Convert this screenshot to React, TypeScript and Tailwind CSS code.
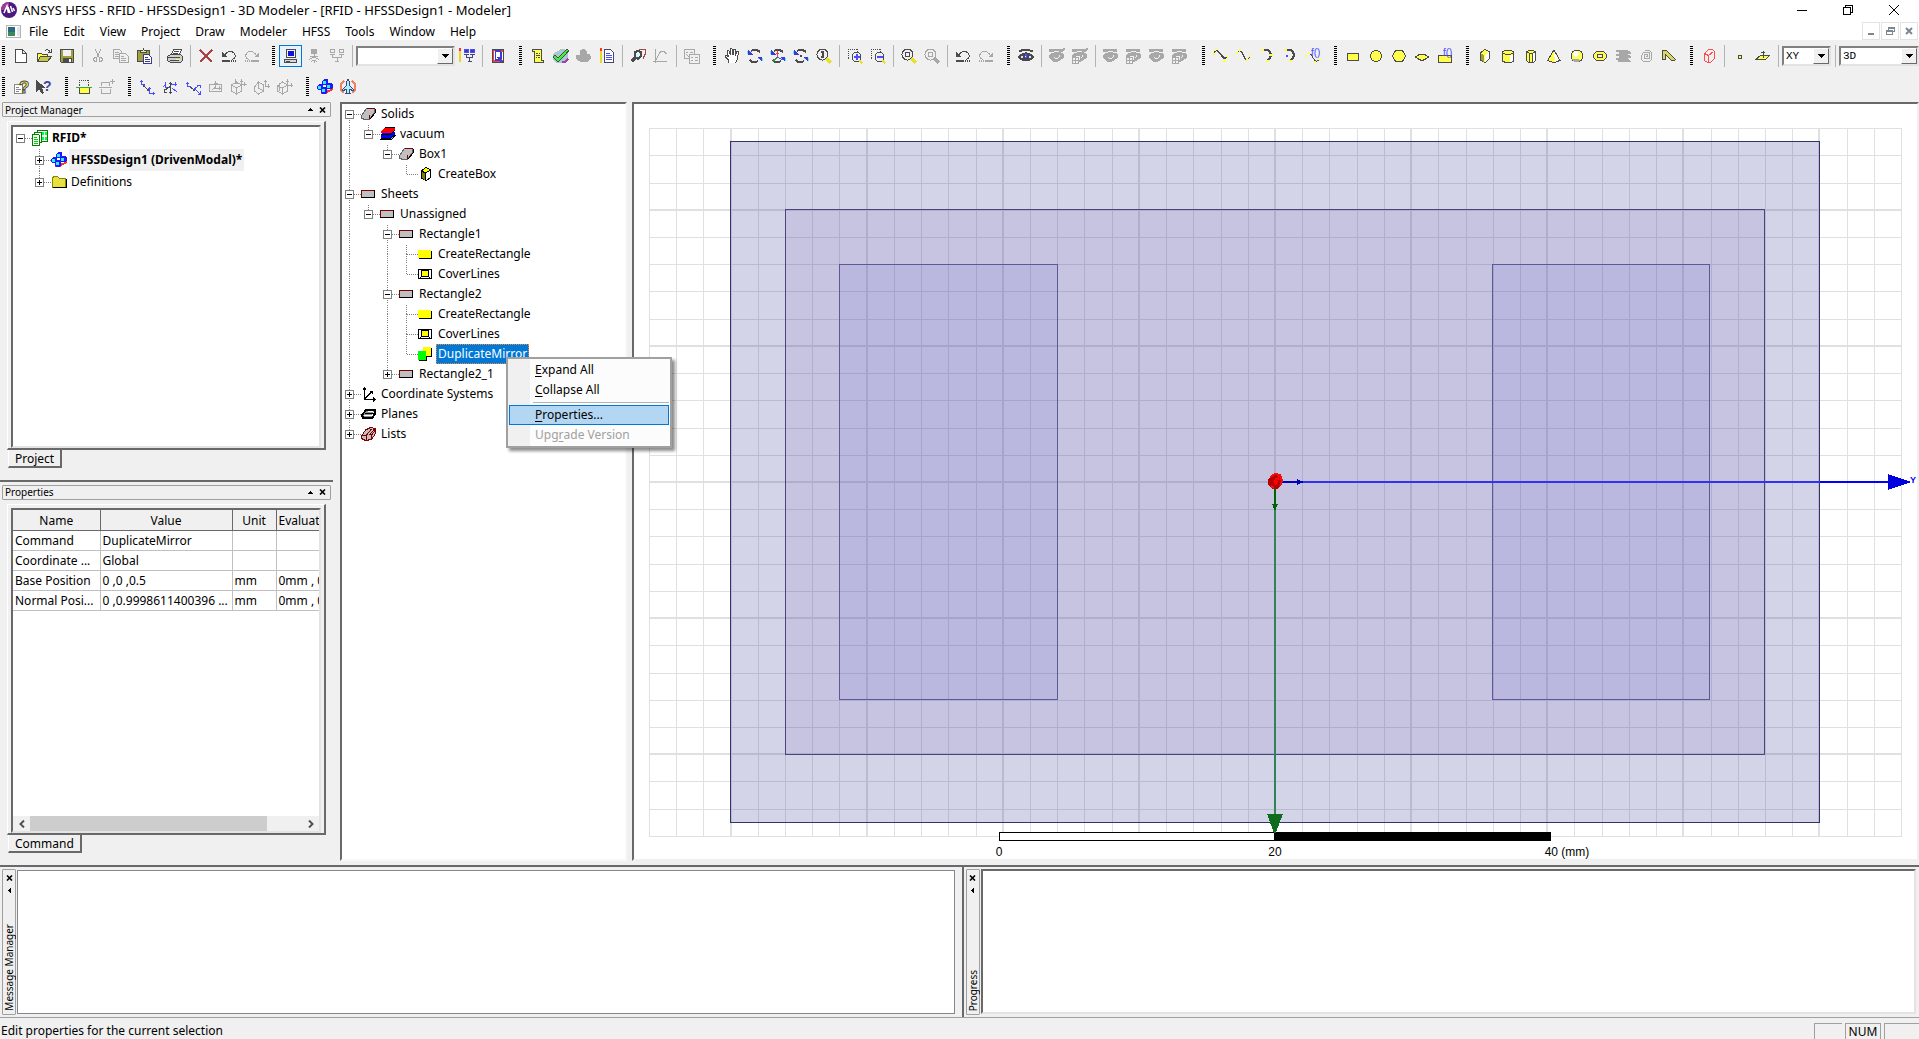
import React, { useState } from 'react';
import { clsx } from 'clsx';

const INK = '#4b4b4b';
const DIM = '#a8a8a8';
const YEL = '#ffff4b';
const BLU = '#4b4bff';

interface StrokeProps {
  d: string;
  s?: string;
  f?: string;
  w?: number;
}

const P = ({ d, s = INK, f = 'none', w = 1 }: StrokeProps) => <path d={d} stroke={s} fill={f} strokeWidth={w} />;

const undoIcon = (c: string) => (
  <>
    <P s={c} d="M4 6.5 Q9 1 13 5 Q16.5 9 11 11.5" />
    <P s="none" f={c} d="M1 4v5h5z" />
    <P s={c} w={2} d="M1 13h8" />
    <P s={c} w={2} d="M10 13h1M12 13h1M14 13h1" />
  </>
);

const redoIcon = (c: string) => (
  <>
    <P s={c} d="M12 6.5 Q7 1 3 5 Q-.5 9 5 11.5" />
    <P s="none" f={c} d="M15 4v5h-5z" />
    <P s={c} w={2} d="M7 13h8" />
    <P s={c} w={2} d="M1 13h1M3 13h1M5 13h1" />
  </>
);

const rotateIcon = (extra: React.ReactNode) => (
  <>
    <P s="#4bf0ff" w={2} d="M1 3v3M5 6h-4M15 10v3M11 10h4" />
    <P w={2} d="M4 3l2-1h4l3 2M3 12l2 2h4l2-1" />
    <P s="none" f="#3b3bd8" d="M1 2v5h5zM15 14v-5h-5z" />
    {extra}
  </>
);

const lensIcon = (c: string, handle: string, inner: React.ReactNode) => (
  <>
    <circle cx="6.5" cy="6.5" r="5.5" fill="#f0f0f0" stroke={c} />
    <P s={handle} w={3} d="M10.5 10.5 L15 15" />
    {inner}
  </>
);

const boxLensIcon = (vertical: boolean) => (
  <>
    <P d="M1.5 1v10M1 1.5h10M10.5 1v3" />
    <P s="#f0f0f0" d="M2 1.5h1M4 1.5h1M6 1.5h1M8 1.5h1M1.5 2v1M1.5 4v1M1.5 6v1M1.5 8v1M10.5 2v1" />
    <circle cx="9.5" cy="9" r="4.5" fill="#f0f0f0" stroke={INK} />
    <P s={BLU} w={2} d={vertical ? 'M7 9h6M10 6v6' : 'M7 9h6'} />
    <P s="#e8e030" w={2} d="M12.5 12 L15.5 15.5" />
  </>
);

const eyeOffIcon = (boxed: boolean, struck: boolean) => (
  <>
    <P s="none" f={DIM} d="M0 1h14v3H0zM0 7 Q7 1 15 6 L15 9 Q10 15 5 14 L0 10z" />
    <P s="#f0f0f0" d="M1 5.5 Q7 2 13 5" />
    <P s="#f0f0f0" d="M5 9 Q7 12 10 9 V7" />
    {struck && <P s={DIM} w={2} d="M9 6 L16 0" />}
    {boxed && (
      <>
        <P s={DIM} f="#f0f0f0" d="M.5 9.5h6v6h-6zM3.5 7.5h5v6" />
        <P s={DIM} d="M.5 12.5h6M3.5 9.5v6" />
      </>
    )}
  </>
);

const axesIcon = (
  <>
    <P s={BLU} d="M2.5 1v5M1 2.5h3M2 5.5h4M5 4.5v3" />
    <P d="M4 6.5 L10 11.5M7.5 11.5h2M9.5 9v2" />
    <P s={BLU} d="M10.5 8v6h5M9 9.5h3M14.5 12.5v3" />
  </>
);

const cubesIcon = (
  <>
    <P s="none" f="#ff3030" d="M4 15l5 0 3-2 4-2v-3l-4 3-8 2z" />
    <P s="none" f="#1a1aff" d="M5 2l2-2h4v4l-1 2h-5zM0 7l2-2h4v5l-1 1h-4l-1-1zM9 6l2-2h3l2 2v2l-2 2h-5zM4 10l2-2h3l1 2v3l-2 2h-3l-1-1z" />
    <P s="none" f="#30f0ff" d="M6 2h3v3H6zM1 7h3v3H1zM10 6h3v3h-3zM5 10h3v3H5z" />
  </>
);

const eqnMark = (
  <text x="6" y="8" fontSize="10" fill={BLU} className="font-['Liberation_Sans',Arial,sans-serif]">
    f()
  </text>
);

const icons: Record<string, React.ReactNode> = {
  new: <P f="#fff" d="M2.5 1.5h7l4 4v9h-11zM9.5 1.5v4h4" />,
  open: (
    <>
      <P f={YEL} d="M1.5 13.5v-8h4l1 1h5v2" />
      <P f="#c8c840" d="M1.5 13.5l3-5h11l-4 5z" />
      <P d="M9 2.5 Q12 0 14.5 4.5M12 4.5h3V1" />
    </>
  ),
  save: (
    <>
      <P f="#a0a040" d="M1.5 1.5h13v13h-12l-1-1z" />
      <P s="none" f="#f0f0f0" d="M4 2h8v6H4z" />
      <P s="none" f={INK} d="M4 10h9v5H4z" />
      <P s="none" f="#fff" d="M10 11h2v3h-2z" />
    </>
  ),
  cut: <P s={DIM} d="M5 1 L9.5 10M11 1 L6.5 10M4.5 9.5h2v4h-2l-1-2zM9.5 9.5h2l1 2-1 2h-2z" />,
  copy: (
    <>
      <P s={DIM} d="M.5 1.5h6l2 2v7h-8zM2 4.5h4M2 6.5h4M2 8.5h4" />
      <P s={DIM} f="#f0f0f0" d="M6.5 5.5h6l3 3v6h-9zM8 8.5h3M8 10.5h5M8 12.5h5" />
    </>
  ),
  paste: (
    <>
      <P f="#a0a040" d="M1.5 2.5h12v11h-12z" />
      <P f="#e8e8a0" d="M4.5 4.5v-2h2l1-1.5 1 1.5h2v2z" />
      <P s="#3a3a90" f="#fff" d="M7.5 6.5h5l3 3v6h-8zM9 9.5h3M9 11.5h5M9 13.5h5" />
    </>
  ),
  print: (
    <>
      <P f="#fff" d="M4.5 6.5l2-5h8l-2 5z" />
      <P f="#d0d0d0" d="M.5 8.5l3-2h10l2 2v4l-2 2h-10l-3-2z" />
      <P d="M1 9.5h12M3 12.5h9M7 3.5h5M6 5h5" />
      <P s={YEL} d="M9 11.5h3" />
    </>
  ),
  delete: <P s="#a84444" w={2} d="M2 2 L14 14M14 2 L2 14" />,
  undo: undoIcon(INK),
  redo: redoIcon(DIM),
  pc: (
    <>
      <P f="#f4f4f4" d="M3.5 1.5h9v8h-9z" />
      <P s="none" f="#1010e0" d="M5 3h6v5H5z" />
      <P f="#d8d8d8" d="M1.5 11.5h12v3h-12zM3 13h4" />
    </>
  ),
  remote: (
    <>
      <P s={DIM} f={DIM} d="M5.5 1.5h5v4h-5z" />
      <P s={DIM} d="M8 6v4M4 8.5h8M3 12 Q8 7 13 12M5 14 Q8 10 11 14M8 12v3" />
    </>
  ),
  cluster: (
    <>
      <P s={DIM} d="M1.5 1.5h4v3h-4zM10.5 1.5h4v3h-4zM3.5 7v2h9V7M8 9v4M6 13.5h4" />
      <P s={DIM} d="M1 6.5h5M10 6.5h5" />
    </>
  ),
  hpc: (
    <>
      <P s="#e8d820" w={2} d="M1 3v11" />
      <P s="#ff3030" w={2} d="M1 0v3" />
      <P s={BLU} f="#3b3bb0" d="M5.5 1.5h4v3h-4zM11.5 1.5h4v3h-4z" />
      <P s="#44447a" d="M5 6.5h5M11 6.5h5M7.5 7v2h6V7M10.5 9v4M8.5 13.5h4" />
    </>
  ),
  queue: (
    <>
      <P f="#ff3b3b" d="M2.5 1.5h11v13h-11z" />
      <P s="#3b3bd8" f="#fff" w={2} d="M6 3h4l1 2v5l-1 2H6l-1-2V5z" />
      <P s="#fff" d="M4.5 3v9M12 4v8" />
      <P s="#3b3bd8" w={2} d="M8 9 l4 5" />
    </>
  ),
  script: (
    <>
      <P f={YEL} d="M2.5 1.5h9v11h2v2h-9v-11h-2z" />
      <P d="M6 5.5h2M9 5.5h1M6 7.5h4M6 9.5h1M8 9.5h2" />
    </>
  ),
  validate: (
    <>
      <P s="none" f="#a8c8d0" d="M0 6l8-5 7 1v8l-5 5H3l-3-3z" />
      <P s="#a040a8" w={2} d="M9 14h3l3-3" />
      <P w={4} d="M1 8 l4 4 L15 2" />
      <P s="#40f040" w={2} d="M1.5 8 l3.5 4 L14.5 2" />
    </>
  ),
  analyze: <P s="none" f={DIM} d="M4 2l4-1 3 2v3h3l1 4-3 4H5l-5-3V7h4z" />,
  notes: (
    <>
      <P s="#e8d820" w={2} d="M2 3v12" />
      <P s="#ff3030" w={2} d="M2 0v3" />
      <P s="#44447a" f="#fff" d="M5.5 1.5h6l3 3v10h-9z" />
      <P s={BLU} d="M7 5.5h4M7 7.5h6M7 9.5h6M7 11.5h6" />
    </>
  ),
  results: (
    <>
      <P s="#a84444" d="M8 2.5l2-1h5v5l-2 4" />
      <P w={2} f="#d8f8ff" d="M5 4l3-1 3 1v4l-3 3-3-2z" />
      <P w={3} d="M6 9 L1.5 13.5" />
    </>
  ),
  plot: <P s={DIM} d="M2.5 1v14M0 13.5h14M3 12 L6.5 5 Q10 1 13.5 6" />,
  report: (
    <>
      <P s={DIM} d="M.5 1.5h10v9h-10zM2 4.5h2M6 4.5h3M2 6.5l3 2" />
      <P s={DIM} f="#f0f0f0" d="M5.5 6.5h10v9h-10zM7 9.5h2M11 9.5h3M7 12.5h2M11 12.5h3" />
    </>
  ),
  pan: <P f="#fff" d="M4.5 15v-3L1 8.5V7h2l1.5 2L3 3.500V2h1.500L6.500 7V1L8 .5 9 7l1-6h1.500V7.500L13 3h1.500l-1 8-2 4" />,
  rotate: rotateIcon(null),
  rotateAxis: rotateIcon(
    <>
      <P s="#f04040" d="M7.500 3v6M6 5.500h3" />
      <P s="#30a030" d="M7.500 9l-4 4" />
      <P s={BLU} d="M7.500 9l5 3" />
    </>
  ),
  rotateCenter: rotateIcon(<P w={2} d="M7 8h2" />),
  zoomFit: lensIcon(INK, '#e8e030', <P w={2} d="M6.500 3v7M5 4h3M5 9h3" />),
  zoomIn: boxLensIcon(true),
  zoomOut: boxLensIcon(false),
  fitAll: lensIcon(INK, '#e8e030', <P d="M4.500 4.500h4v4h-4z" />),
  fitSel: lensIcon(DIM, DIM, <P s={DIM} d="M4.500 4.500h4v4h-4z" />),
  eye: (
    <>
      <P d="M1 3.500 Q7 0 15 3.500" w={2} />
      <P w={2} f="#e0e0e0" d="M1 9 Q8 2 15 9 Q8 16 1 9z" />
      <circle cx="8" cy="9" r="3.500" fill="#44446a" />
      <P s={BLU} w={2} d="M8 6v4" />
      <P s="#fff" d="M7 8.500h1" />
    </>
  ),
  hide: eyeOffIcon(false, true),
  hideBox: eyeOffIcon(true, true),
  show: eyeOffIcon(false, false),
  showBox: eyeOffIcon(true, false),
  line: (
    <>
      <P s={YEL} w={2} d="M0 6h2M2 2h3M10 13h3M13 9h2" />
      <P d="M1 4.500l3-2.500 8 8.500 3-2.500M4 3l8 8.500" />
      <P s={YEL} w={2} d="M0 5h1M11 12h1M14 8h1" />
    </>
  ),
  spline: (
    <>
      <P d="M1 5 Q4 0 7 7 Q10 15 14 9M5 3 Q6 4 8 8 Q9 11 11 12" />
      <P s={YEL} w={2} d="M0 5h2M3 2h2M10 12h2M13 8h2" />
    </>
  ),
  arc3: (
    <>
      <P w={2} d="M5 2h4l2 2 1 3-1 3-3 3" />
      <P s={YEL} w={2} d="M2 2h3M11 7h3M7 13h3" />
    </>
  ),
  arcC: (
    <>
      <P w={2} d="M5 2h4l2 2 1 3-1 3-3 3" />
      <P s={YEL} w={2} d="M2 2h3M7 13h3" />
      <P s={BLU} w={2} d="M4 8h2" />
    </>
  ),
  curveEq: (
    <>
      <P d="M3 5.500 Q6 5 8 10 Q11 15 14 12" />
      <P s={YEL} w={2} d="M0 8h2M3 5h2M9 14h2M14 11h2" />
      {eqnMark}
    </>
  ),
  rect: <P f={YEL} d="M2.500 5.500h11v7h-11z" />,
  circle: <circle cx="8" cy="8" r="5.500" fill={YEL} stroke={INK} />,
  polygon: <P f={YEL} d="M4.500 2.500h7l3 5.500-3 5.500h-7L1.500 8z" />,
  ellipse: <P f={YEL} d="M1.500 9l3-2 2-1h3l2 1 3 2-3 2-2 1h-3l-2-1z" />,
  surfEq: (
    <>
      <P f={YEL} d="M1.500 7.500h13v7h-13z" />
      {eqnMark}
    </>
  ),
  box: (
    <>
      <P f={YEL} d="M3.500 5l4-3.500 5 2v7l-4 4-5-2z" />
      <P s="none" f="#fff" d="M8 7l4-3v7l-4 3z" />
      <P s="none" f="#a0a030" d="M4 6l3 1v7l-3-2z" />
    </>
  ),
  cylinder: (
    <>
      <P f={YEL} d="M2.500 4v9l3 1.500h5l3-1.500V4l-3-2h-5z" />
      <P s="none" f="#fff" d="M10 7h3v6l-3 1z" />
      <P d="M2.500 4.500l3 2h5l3-2" />
    </>
  ),
  prism: (
    <>
      <P f={YEL} d="M3.500 3.500v9l2 2h5l2-2v-9l-3-1h-3z" />
      <P s="none" f="#fff" d="M10 5h2v7l-2 2z" />
      <P d="M3.500 3.500l3 2h3l3-2M6.500 5v9M9.500 5v9" />
    </>
  ),
  cone: (
    <>
      <P f={YEL} d="M8 2 L14 12.500 8 14.500 1.500 12.500z" />
      <P s="none" f="#fff" d="M8 3l5 9-4 2z" />
    </>
  ),
  sphere: (
    <>
      <circle cx="8" cy="8" r="6" fill={YEL} stroke={INK} />
      <P s="none" f="#fff" d="M5 3h3l2 3-3 3-3-2z" />
      <P s="none" f={DIM} d="M3 11h6l2 2-3 1H5z" />
    </>
  ),
  torus: (
    <>
      <P f={YEL} d="M4.500 3.500h7l3 3v3l-3 3h-7l-3-3v-3z" />
      <P f="#f0f0f0" d="M5.500 6.500h5v3h-5z" />
    </>
  ),
  helix: <P s={DIM} w={2} d="M1 3h11l3 2H4M1 7h11l3 2H4M1 11h11l2 2H3" />,
  spiral: <P s={DIM} d="M8 8.500h1.500V6.500H6.500v4h5v-6h-6l-2 3v4l2 2h6l2-2v-7l-2-2h-5" />,
  sweep: <P f="#d8d860" d="M1.500 11.500v-9h4l9 9-1 1h-3l-6-6v5z" />,
  region: <P s="#ff4b4b" d="M3.500 5.500l4-4h4l2 2v7l-4 4h-3l-3-2zM3.500 5.500l4 2 5-4M7.500 7.500v7" />,
  point: <P f={YEL} d="M6.500 7.500h3v3h-3z" />,
  plane: (
    <>
      <P f={YEL} d="M5.500 7.500h9l-4 4h-10z" />
      <P d="M8 9.500v-7M6 4.500h4" />
    </>
  ),
  help: (
    <>
      <P s="#888" f="#fff" d="M1.500 5.500h8v9h-8zM3 8.500h3M3 10.500h5M3 12.500h3" />
      <text x="6" y="14" fontSize="17" fontWeight="bold" fill={YEL} stroke={INK} className="font-['Liberation_Sans',Arial,sans-serif]">
        ?
      </text>
    </>
  ),
  whatsThis: (
    <>
      <P s="none" f={INK} d="M0 1v12l3-3 3 5 2-1-2-5h4z" />
      <text x="7" y="12" fontSize="14" fontWeight="bold" fill="#44449a" className="font-['Liberation_Sans',Arial,sans-serif]">
        ?
      </text>
    </>
  ),
  section: (
    <>
      <P d="M3.500 7V1.500h9V7" />
      <P s="#f0f0f0" d="M4 1.500h1M6 1.500h1M8 1.500h1M10 1.500h1M3.500 2v1M3.500 4v1M12.500 2v1M12.500 4v1" />
      <P f={YEL} d="M3.500 8.500h10v6h-10z" />
      <P s="#30b030" d="M0 8.500h16" />
    </>
  ),
  sectionAdd: (
    <>
      <P s={DIM} d="M2.500 7V3.500h8V7M2.500 9.500v5h9v-5M0 8.500h13M13.500 0v5M11 2.500h5" />
    </>
  ),
  csRel: axesIcon,
  csRot: (
    <>
      <P s={BLU} d="M3.500 3v5h4M1 7.500l3-2M9 5.500h6M13.500 3v4M10 9l5 4" />
      <P d="M8.500 3v12M7 4.500h3M2 12l6-5M2 10v3h3M7 13.500h3" />
    </>
  ),
  csBoth: (
    <>
      <P s={BLU} d="M2.500 3v5M1 4.500h3M2 7.500h4" />
      <P d="M5 8 L10 11.500M7.500 11.500h2" />
      <P s={BLU} d="M14.500 6 L9 10M9.500 10l6 5M15.500 12v3h-3M12 6.500h3v2" />
    </>
  ),
  csFace: <P s={DIM} d="M1.500 5.500h12v7h-12zM7.500 2v7h6M5.500 4h4M4 11l4-3M11.500 7v4" />,
  csObj: <P s={DIM} d="M.5 6l5-3 5 3v6l-5 3-5-3zM.5 6l5 3 5-3M5.500 9v6M4.500 0v4h4M10.500 0v5h5M9 2h3M13.500 3v4" />,
  csEdge: <P s={DIM} d="M.5 8l4-5 5 3v6l-5 3-4-3zM4.500 3v6l5 3M11.500 1v6h4M10 2.500h3M14 4.500v4" />,
  csPart: <P s={DIM} d="M.5 7l5-4 5 3v6l-5 3-5-3zM.5 7l5 2 5-3M5.500 9v6M2.500 4v8M10.500 0v6h5M9 2h3M14 4v4" />,
  cubes: cubesIcon,
  antenna: (
    <>
      <P s="#f08060" w={2} d="M4 2 L1 5v6l3 3M12 2 L15 5v6l-3 3" />
      <P s="#3a4a80" f="#a8f0f8" d="M8 .5l1.500 2v4l4 4v1l-4-1v3l1 1h-5l1-1v-3l-4 1v-1l4-4v-4z" />
    </>
  ),
  project: (
    <>
      <P s="#008000" f="#fff" d="M5.500.5h10v11h-10z" />
      <P s="#008000" f="#fff" d="M2.500 2.500h7v10h-7z" />
      <P s="#008000" f="#fff" d="M.5 4.500h6l1 1v10h-7z" />
      <P s="#00d000" d="M2 7.500h3M2 9.500h4M2 11.500h4M2 13.500h4" />
      <P s="#00ff40" w={2} d="M11 2v3M14 2v3M11 7v3M14 7v3" />
    </>
  ),
  folder: (
    <>
      <P s="#888800" f="#e8e040" d="M1.500 13.500v-9l1-2h4l2 2h6v9z" />
      <P s="#000" d="M2 13.500h13.500V5" />
    </>
  ),
  solid: (
    <>
      <P s="#666" f="#c0c0c0" d="M.5 9.500l5-7h8v4l-5 7h-4l-4-1z" />
      <P s="#800000" d="M6 2.500h8M8.500 13V9" />
      <P s="#000" d="M9 13l5-6V3" />
    </>
  ),
  material: (
    <>
      <P s="#000" f="#00ffff" d="M.5 13.500l4-4h11l-4 4z" />
      <P s="none" f="#0000ff" d="M1 8l4-2h10v3l-4 3H1z" />
      <P s="none" f="#ff0000" d="M1 5l4-4h10v3l-4 3H1z" />
      <P s="#000" d="M1 8h10l4-4M5 1.500h10M1 12h10l4-3" />
    </>
  ),
  createBox: (
    <>
      <P s="#000" f="#ffff00" d="M3.500 5l4-3.500 5 2v8l-4 3-5-2z" />
      <P s="none" f="#fff" d="M8 7l4-3v7l-4 3z" />
      <P s="none" f="#808000" d="M4 6l3 1v7l-3-2z" />
      <P s="#000" d="M3.500 5l4 2 5-3M7.500 7v7" />
    </>
  ),
  sheet: (
    <>
      <P s="#000" f="#c0c0c0" d="M.5 4.500h13v7H.5z" />
      <P s="#800000" d="M.5 11V4.500H13" />
    </>
  ),
  createRect: (
    <>
      <P s="none" f="#ffff00" d="M0 4h13v8H0z" />
      <P s="#000" d="M1 12.500h12.500V5" />
    </>
  ),
  coverLines: (
    <>
      <P s="#000" f="#fff" d="M.5 3.500h13v9H.5z" />
      <P s="#000" f="#ffff00" d="M3.500 4.500h7v6h-7z" />
      <P s="#000" d="M1 3.500h12M1 12.500l2-1M13 12.500l-2-1" />
    </>
  ),
  dupMirror: (
    <>
      <P s="none" f="#ffff00" d="M5 1h8v9H5z" />
      <P s="#000" d="M6 10.500h7.500V2" />
      <P s="none" f="#00ff00" d="M0 5h8v9H0z" />
      <P s="#000" d="M1 14.500h7.500V11" />
    </>
  ),
  coord: <P s="#000" d="M3.500 1v12h10M2 3.500l1.500-2 1.500 2M12 11.500l2 2-2 2M3.500 13L11 5.500M9 5.500h2.500V8" />,
  planes: (
    <>
      <P s="#000" f="#909090" w={2} d="M1 9l4-5h9v4l-3 4H2z" />
      <P s="#fff" d="M3 9.500h8l2-3M7 5.500h5" />
      <P s="#000" d="M4 7.500h9M2 11.500h9" />
    </>
  ),
  lists: (
    <>
      <P s="#800000" f="#c0c0c0" d="M.5 10l4-6 5-2.500 5 1v5l-4 6-6 1-4-2z" />
      <P s="#800000" d="M5.500 14V9l5-6M.5 10l5-1M8.500 9l5-6M10.500 13v-4l4-5" />
    </>
  ),
};

const Icon = ({ name, className }: { name: string; className?: string }) => (
  <svg viewBox="0 0 16 16" shapeRendering="crispEdges" aria-hidden="true" className={clsx('h-4 w-4 flex-none', className)}>
    {icons[name]}
  </svg>
);

const ToolButton = ({ name, active }: { name: string; active?: boolean }) => (
  <button
    type="button"
    aria-label={name}
    className={clsx(
      'flex h-[22px] w-[23px] flex-none items-center justify-center',
      active && 'border border-[#0078d7] bg-[#e5f1fb]'
    )}
  >
    <Icon name={name} />
  </button>
);

const Divider = () => (
  <div className="flex w-2 flex-none justify-center">
    <div className="h-[22px] w-px bg-[#b4b4b4]" />
  </div>
);

/* '|' in the list draws a divider */
const Tools = ({ names }: { names: string[] }) => (
  <>{names.map((n, i) => (n === '|' ? <Divider key={i} /> : <ToolButton key={i} name={n} active={n === 'pc'} />))}</>
);

const Group = ({ children, className = 'pr-2' }: { children: React.ReactNode; className?: string }) => (
  <div className={clsx('flex flex-none items-center pl-[2px]', className)}>
    <div className="mr-1 h-[19px] w-[3px] bg-[repeating-linear-gradient(to_bottom,#000_0_1px,transparent_1px_2px)]" />
    {children}
  </div>
);

const Combo = ({ label, options, className }: { label: string; options: string[]; className: string }) => (
  <div className={clsx('relative flex h-5 border-2 border-t-[#808080] border-r-[#e3e3e3] border-b-[#e3e3e3] border-l-[#808080] bg-white', className)}>
    <select
      aria-label={label}
      className="w-full appearance-none bg-white pl-[2px] font-['Liberation_Mono',monospace] text-[11px] leading-4 text-black outline-none"
    >
      {options.map((o) => (
        <option key={o}>{o}</option>
      ))}
    </select>
    <span className="pointer-events-none absolute top-0 right-0 flex h-4 w-4 items-center justify-center border border-t-white border-r-[#696969] border-b-[#696969] border-l-white bg-[#f0f0f0]">
      <svg viewBox="0 0 7 4" className="h-1 w-[7px]" shapeRendering="crispEdges" aria-hidden="true">
        <path d="M0 0h7L3.500 4z" />
      </svg>
    </span>
  </div>
);

interface TreeItem {
  icon: string;
  label: string;
  bold?: boolean;
  state?: 'selected' | 'inactive';
  children?: TreeItem[];
  collapsed?: boolean;
}

interface TreeRowsProps {
  items: TreeItem[];
  tall?: boolean;
  guides?: boolean[];
}

/* one 19px column of dotted connectors */
const Guide = ({ up, down, across, box }: { up?: boolean; down?: boolean; across?: boolean; box?: 'plus' | 'minus' }) => (
  <svg width="19" height="100%" viewBox="0 0 19 22" preserveAspectRatio="xMidYMid slice" shapeRendering="crispEdges" className="flex-none" aria-hidden="true">
    <g stroke="#808080" strokeDasharray="1 1">
      {up && <path d="M7.500 0V11" />}
      {down && <path d="M7.500 11V22" />}
      {across && <path d="M8 11.500H19" />}
    </g>
    {box && <path d="M3.500 7.500h8v8h-8z" fill="#fff" stroke="#808080" />}
    {box && <path d={box === 'plus' ? 'M5 11.500h5M7.500 9v5' : 'M5 11.500h5'} stroke="#000" />}
  </svg>
);

const TreeRows = ({ items, tall, guides = [] }: TreeRowsProps) => {
  const [closed, setClosed] = useState<Record<number, boolean>>({});

  return (
    <ul>
      {items.map((item, i) => {
        const last = i === items.length - 1;
        const expandable = item.children !== undefined || item.collapsed;
        const isOpen = item.children !== undefined && !closed[i];
        return (
          <li key={i}>
            <div
              className={clsx('flex items-center', tall ? 'h-[22px]' : 'h-5')}
              onDoubleClick={() => setClosed({ ...closed, [i]: !closed[i] })}
            >
              {guides.map((g, k) => (
                <Guide key={k} up={g} down={g} />
              ))}
              <Guide
                up={guides.length > 0 || i > 0}
                down={!last}
                across
                box={expandable ? (isOpen ? 'minus' : 'plus') : undefined}
              />
              <Icon name={item.icon} />
              <span
                className={clsx(
                  'ml-[2px] flex h-full items-center border px-px whitespace-nowrap',
                  item.bold && 'font-bold',
                  item.state === 'selected' ? 'border-dotted border-[#ff8728] bg-[#0078d7] text-white' : 'border-transparent',
                  item.state === 'inactive' && 'bg-[#f0f0f0]'
                )}
              >
                {item.label}
              </span>
            </div>
            {isOpen && <TreeRows items={item.children!} tall={tall} guides={[...guides, !last]} />}
          </li>
        );
      })}
    </ul>
  );
};

const projectTree: TreeItem[] = [
  {
    icon: 'project',
    label: 'RFID*',
    bold: true,
    children: [
      { icon: 'cubes', label: 'HFSSDesign1 (DrivenModal)*', bold: true, state: 'inactive', collapsed: true },
      { icon: 'folder', label: 'Definitions', collapsed: true },
    ],
  },
];

const modelTree: TreeItem[] = [
  {
    icon: 'solid',
    label: 'Solids',
    children: [
      {
        icon: 'material',
        label: 'vacuum',
        children: [{ icon: 'solid', label: 'Box1', children: [{ icon: 'createBox', label: 'CreateBox' }] }],
      },
    ],
  },
  {
    icon: 'sheet',
    label: 'Sheets',
    children: [
      {
        icon: 'sheet',
        label: 'Unassigned',
        children: [
          {
            icon: 'sheet',
            label: 'Rectangle1',
            children: [
              { icon: 'createRect', label: 'CreateRectangle' },
              { icon: 'coverLines', label: 'CoverLines' },
            ],
          },
          {
            icon: 'sheet',
            label: 'Rectangle2',
            children: [
              { icon: 'createRect', label: 'CreateRectangle' },
              { icon: 'coverLines', label: 'CoverLines' },
              { icon: 'dupMirror', label: 'DuplicateMirror', state: 'selected' },
            ],
          },
          { icon: 'sheet', label: 'Rectangle2_1', collapsed: true },
        ],
      },
    ],
  },
  { icon: 'coord', label: 'Coordinate Systems', collapsed: true },
  { icon: 'planes', label: 'Planes', collapsed: true },
  { icon: 'lists', label: 'Lists', collapsed: true },
];

const CloseGlyph = () => (
  <svg viewBox="0 0 7 6" className="h-[6px] w-[7px]" aria-hidden="true">
    <path d="M1 .5 L6 5.500M6 .5 L1 5.500" stroke="#000" strokeWidth="1.600" />
  </svg>
);

const Caption = ({ title }: { title: string }) => (
  <div className="mx-[2px] flex h-[15px] flex-none items-center rounded-[1px] border border-[#a0a0a0] pr-[2px] pl-[2px]">
    <h2 className="flex-1 text-[10px] leading-3">{title}</h2>
    <button type="button" aria-label={`Collapse ${title}`} className="flex h-3 w-3 items-center justify-center">
      <svg viewBox="0 0 5 3" className="h-[3px] w-[5px]" shapeRendering="crispEdges" aria-hidden="true">
        <path d="M0 3h5L2.500 0z" />
      </svg>
    </button>
    <button type="button" aria-label={`Close ${title}`} className="flex h-3 w-3 items-center justify-center">
      <CloseGlyph />
    </button>
  </div>
);

const SideCaption = ({ title }: { title: string }) => (
  <div className="mb-[2px] ml-[2px] flex w-[14px] flex-none flex-col items-center rounded-[1px] border border-[#a0a0a0] pt-1 pb-[3px]">
    <button type="button" aria-label={`Close ${title}`} className="flex h-[7px] w-3 items-center justify-center">
      <CloseGlyph />
    </button>
    <button type="button" aria-label={`Collapse ${title}`} className="mt-[7px] flex h-[5px] w-3 items-center justify-center">
      <svg viewBox="0 0 3 5" className="h-[5px] w-[3px]" shapeRendering="crispEdges" aria-hidden="true">
        <path d="M3 0v5L0 2.500z" />
      </svg>
    </button>
    <h2 className="mt-auto rotate-180 text-[10px] leading-3 whitespace-nowrap [writing-mode:vertical-rl]">{title}</h2>
  </div>
);

const TabFrame = ({ tab, children }: { tab: string; children: React.ReactNode }) => (
  <>
    <div className="mx-[7px] mt-1 flex min-h-0 flex-1 flex-col border border-t-white border-r-2 border-r-[#696969] border-b-2 border-b-[#696969] border-l-white p-[3px] pb-0">
      <div className="flex min-h-0 flex-1 flex-col overflow-hidden border-2 border-t-[#696969] border-r-[#e3e3e3] border-b-[#e3e3e3] border-l-[#696969] bg-white">
        {children}
      </div>
    </div>
    <div className="flex flex-none pl-2">
      <button
        type="button"
        className="mb-3 h-[18px] border-r-2 border-b-2 border-l border-r-[#696969] border-b-[#696969] border-l-white px-[6px] pt-px leading-4"
      >
        {tab}
      </button>
    </div>
  </>
);

const rows = [
  ['Command', 'DuplicateMirror', '', ''],
  ['Coordinate ...', 'Global', '', ''],
  ['Base Position', '0 ,0 ,0.5', 'mm', '0mm , 0mm'],
  ['Normal Posi...', '0 ,0.9998611400396 ...', 'mm', '0mm , 0mm'],
];

const PropertyTable = () => (
  <>
    <table className="w-full table-fixed border-collapse">
      <colgroup>
        <col className="w-[87px]" />
        <col className="w-[132px]" />
        <col className="w-11" />
        <col />
      </colgroup>
      <thead>
        <tr className="h-[21px]">
          {['Name', 'Value', 'Unit', 'Evaluated'].map((h) => (
            <th
              key={h}
              className="overflow-hidden border-r border-b border-[#696969] bg-[#f0f0f0] px-[2px] pt-[2px] pb-0 leading-4 font-normal whitespace-nowrap last:border-r-0"
            >
              {h}
            </th>
          ))}
        </tr>
      </thead>
      <tbody>
        {rows.map((r) => (
          <tr key={r[0]} className="h-5">
            {r.map((c, i) => (
              <td key={i} className="overflow-hidden border-r border-b border-[#c0c0c0] px-[2px] py-0 leading-4 whitespace-nowrap last:border-r-0">
                {c}
              </td>
            ))}
          </tr>
        ))}
      </tbody>
    </table>
    <div className="mt-auto flex h-[15px] flex-none items-center bg-[#f0f0f0]">
      <button type="button" aria-label="Scroll left" className="flex w-[17px] justify-center">
        <svg viewBox="0 0 6 8" className="h-2 w-[6px]" aria-hidden="true">
          <path d="M5 0.500 L1.500 4 L5 7.500" fill="none" stroke="#505050" strokeWidth="2" />
        </svg>
      </button>
      <div className="h-full flex-1">
        <div className="h-full w-[87%] bg-[#cdcdcd]" />
      </div>
      <button type="button" aria-label="Scroll right" className="flex w-[17px] justify-center">
        <svg viewBox="0 0 6 8" className="h-2 w-[6px]" aria-hidden="true">
          <path d="M1 0.500 L4.500 4 L1 7.500" fill="none" stroke="#505050" strokeWidth="2" />
        </svg>
      </button>
    </div>
  </>
);

const menuItems = [
  { pre: '', key: 'E', rest: 'xpand All' },
  { pre: '', key: 'C', rest: 'ollapse All' },
  null,
  { pre: '', key: 'P', rest: 'roperties...', hot: true },
  { pre: 'Upg', key: 'r', rest: 'ade Version', off: true },
];

const ContextMenu = () => (
  <div
    role="menu"
    className="absolute top-[253px] left-[164px] z-10 w-[166px] border-2 border-[#a0a0a0] bg-[linear-gradient(to_right,#f0f0f0_22px,#fcfcfc_22px)] p-px shadow-[3px_3px_3px_rgba(0,0,0,0.45)]"
  >
    {menuItems.map((m, i) =>
      m === null ? (
        <div key={i} className="my-[2px] ml-6 h-px bg-[#b4b4b4]" />
      ) : (
        <button
          key={i}
          type="button"
          role="menuitem"
          disabled={m.off}
          className={clsx(
            'flex h-5 w-full items-center border pl-[25px] whitespace-pre',
            m.hot ? 'border-[#0078d7] bg-[#b3d7f3]' : 'border-transparent',
            m.off && 'text-[#a0a0a0]'
          )}
        >
          {m.pre}
          <span className="underline underline-offset-2">{m.key}</span>
          {m.rest}
        </button>
      )
    )}
  </div>
);

const CELL = 27.22;
const steps = (n: number) => Array.from({ length: 2 * n + 1 }, (_, i) => i - n);
const px = (k: number) => Math.round(k * CELL);

const GridLines = () => (
  <g stroke="#e0e0e0">
    {steps(23).map((k) => (
      <path key={k} d={`M${px(k)} -353V354`} strokeWidth={k % 5 === 0 ? 2 : 1} transform={k % 5 === 0 ? undefined : 'translate(.5 0)'} />
    ))}
    {steps(13).map((k) => (
      <path key={k} d={`M-626 ${px(k)}H627`} strokeWidth={k % 5 === 0 ? 2 : 1} transform={k % 5 === 0 ? undefined : 'translate(0 .5)'} />
    ))}
  </g>
);

const Viewport = () => (
  <svg viewBox="-641 -378 1283 755" className="block h-full w-full" shapeRendering="crispEdges" role="img" aria-label="Modeler view">
    <GridLines />
    <rect x="-544.500" y="-340.500" width="1089" height="681" fill="#28288c" fillOpacity=".2" stroke="#32326e" />
    <rect x="-489.500" y="-272.500" width="979" height="545" fill="#7864be" fillOpacity=".14" stroke="#46467d" />
    <rect x="-435.500" y="-217.500" width="218" height="435" fill="#6464c8" fillOpacity=".12" stroke="#5a5a96" />
    <rect x="217.500" y="-217.500" width="217" height="435" fill="#6464c8" fillOpacity=".12" stroke="#5a5a96" />

    {/* length scale */}
    <rect x="-275.500" y="350.500" width="275" height="8" fill="#fff" stroke="#000" />
    <rect x="0" y="350" width="276" height="9" fill="#000" />
    <g className="font-['Liberation_Sans',Arial,sans-serif] text-[12px]" textAnchor="middle">
      <text x="-276" y="374">0</text>
      <text x="0" y="374">20</text>
      <text x="292" y="374">40 (mm)</text>
    </g>

    {/* global axes */}
    <path d="M0 0V335" stroke="#32825a" strokeWidth="2" />
    <path d="M-8 332h16L3 345 1 351h-2z" fill="#0f6e1e" />
    <path d="M0 0H545" stroke="#3232f0" strokeWidth="2" />
    <path d="M545 0H614" stroke="#00f" strokeWidth="2" />
    <path d="M613 -8V8L636 0z" fill="#00d" />
    <text x="635" y="1" fill="#00f" className="font-['Liberation_Sans',Arial,sans-serif] text-[9px] font-bold">Y</text>

    {/* working coordinate system */}
    <path d="M0 0V28" stroke="#006400" strokeWidth="2" />
    <path d="M-3 22h6L0 29z" fill="#006400" />
    <path d="M0 0H24" stroke="#0000c8" strokeWidth="2" />
    <path d="M22 -3v6l7-3z" fill="#0000b4" />
    <circle cx="0" cy="0" r="7" fill="#b40000" />
    <path d="M-5 -5l5-3 5 1 2 6-2 5M-4 4l3 2M0 -2l4-3" stroke="#f01010" strokeWidth="2" fill="none" />
    <path d="M-2 -1l2-2 3 3-3 3z" fill="#f00" />
    <text x="1" y="-2" fill="#f00" className="font-['Liberation_Sans',Arial,sans-serif] text-[9px]">Z</text>
  </svg>
);

const menus = ['File', 'Edit', 'View', 'Project', 'Draw', 'Modeler', 'HFSS', 'Tools', 'Window', 'Help'];

export default function App() {
  return (
    <div className="flex h-screen min-h-[640px] flex-col overflow-hidden bg-[#f0f0f0] font-['Noto_Sans','Noto_Sans_CJK_SC',sans-serif] text-[12px] leading-4 text-black">
      {/* title bar */}
      <header className="flex h-5 flex-none items-center bg-white pl-px">
        <svg viewBox="0 0 16 16" className="h-4 w-4 flex-none" aria-hidden="true">
          <circle cx="8" cy="8" r="8" fill="#4a1a80" />
          <path d="M8 0 A8 8 0 0 0 0 8 L8 8z" fill="#a03a90" />
          <path d="M3 11 L6 4 L7.500 11M7 5 L9 11M9.500 4 L11.500 10M12 6L13.500 9" stroke="#fff" strokeWidth="1.500" fill="none" />
        </svg>
        <h1 className="ml-[5px] flex-1 text-[13px]">ANSYS HFSS - RFID - HFSSDesign1 - 3D Modeler - [RFID - HFSSDesign1 - Modeler]</h1>
        <div className="flex pr-[2px]">
          <button type="button" aria-label="Minimize" className="flex h-5 w-[46px] items-center justify-center">
            <svg viewBox="0 0 10 10" className="h-[10px] w-[10px]" shapeRendering="crispEdges"><path d="M0 5.500h10" stroke="#000" /></svg>
          </button>
          <button type="button" aria-label="Restore" className="flex h-5 w-[46px] items-center justify-center">
            <svg viewBox="0 0 10 10" className="h-[10px] w-[10px]" shapeRendering="crispEdges"><path d="M.5 2.500h7v7h-7zM2.500 2V.5h7v7H8" stroke="#000" fill="none" /></svg>
          </button>
          <button type="button" aria-label="Close" className="flex h-5 w-[46px] items-center justify-center">
            <svg viewBox="0 0 10 10" className="h-[10px] w-[10px]"><path d="M0 0L10 10M10 0L0 10" stroke="#000" /></svg>
          </button>
        </div>
      </header>

      {/* menu bar */}
      <nav className="flex h-5 flex-none items-end bg-white pl-[6px]">
        <svg viewBox="0 0 15 13" className="mr-2 mb-[2px] h-[13px] w-[15px] flex-none" shapeRendering="crispEdges" aria-hidden="true">
          <path d="M.5.5h14v12h-14z" fill="#fff" stroke="#b4b4b4" />
          <path d="M2 2h7v9H2z" fill="#2a6a7a" />
          <path d="M2 7h7v4H2z" fill="#3a8a60" />
          <path d="M11 2h3v9h-3z" fill="#dce6f0" />
        </svg>
        <div className="flex flex-1 gap-[15px]">
          {menus.map((m) => (
            <button key={m} type="button">{m}</button>
          ))}
        </div>
        <div className="flex gap-px pr-px text-[#7a8894]">
          <button type="button" aria-label="Minimize window" className="flex h-[18px] w-[18px] items-center justify-center border border-[#e3e3e3]">
            <svg viewBox="0 0 8 8" className="h-2 w-2"><path d="M1 7h6" stroke="currentColor" strokeWidth="2" /></svg>
          </button>
          <button type="button" aria-label="Restore window" className="flex h-[18px] w-[18px] items-center justify-center border border-[#e3e3e3]">
            <svg viewBox="0 0 9 8" className="h-2 w-[9px]" shapeRendering="crispEdges"><path d="M2.500 3V.5h6v4H7M.5 3.500h6v4h-6zM3 1.500h5M1 4.500h5" stroke="currentColor" fill="none" /></svg>
          </button>
          <button type="button" aria-label="Close window" className="flex h-[18px] w-[18px] items-center justify-center border border-[#e3e3e3]">
            <svg viewBox="0 0 8 8" className="h-2 w-2"><path d="M1 1L7 7M7 1L1 7" stroke="currentColor" strokeWidth="2" /></svg>
          </button>
        </div>
      </nav>

      {/* toolbars */}
      <div className="flex h-[31px] flex-none items-center">
        <Group className="pr-[7px]">
          <Tools names={['new', 'open', 'save', '|', 'cut', 'copy', 'paste', '|', 'print', '|', 'delete', 'undo', 'redo']} />
        </Group>
        <Group>
          <Tools names={['pc', 'remote', 'cluster', '|']} />
          <Combo label="Solve setup" options={['']} className="w-[99px] flex-none" />
          <Tools names={['hpc', '|', 'queue']} />
        </Group>
        <Group>
          <Tools names={['script', 'validate', 'analyze', 'notes', '|', 'results', 'plot', '|', 'report']} />
        </Group>
        <Group>
          <Tools
            names={['pan', 'rotate', 'rotateAxis', 'rotateCenter', 'zoomFit', '|', 'zoomIn', 'zoomOut', '|', 'fitAll', 'fitSel', '|', 'undo', 'redo']}
          />
        </Group>
        <Group className="pr-[9px]">
          <Tools names={['eye', '|', 'hide', 'hideBox', '|', 'show', 'showBox', 'show', 'showBox']} />
        </Group>
        <Group>
          <Tools names={['line', 'spline', 'arc3', 'arcC', 'curveEq']} />
        </Group>
        <Group>
          <Tools names={['rect', 'circle', 'polygon', 'ellipse', 'surfEq']} />
        </Group>
        <Group>
          <Tools names={['box', 'cylinder', 'prism', 'cone', 'sphere', 'torus', 'helix', 'spiral', 'sweep']} />
        </Group>
        <div className="flex min-w-0 flex-1 items-center">
          <Group className="pr-0">
            <Tools names={['region', '|', 'point', 'plane', '|']} />
          </Group>
          <Combo label="Drawing plane" options={['XY', 'YZ', 'XZ']} className="w-[49px] flex-none" />
          <Divider />
          <Combo label="Movement mode" options={['3D', 'In Plane', 'Along X']} className="min-w-[60px] flex-1" />
        </div>
      </div>
      <div className="flex h-[31px] flex-none items-center">
        <Group>
          <Tools names={['help', 'whatsThis']} />
        </Group>
        <Group>
          <Tools names={['section', 'sectionAdd']} />
        </Group>
        <Group>
          <Tools names={['csRel', 'csRot', 'csBoth', 'csFace', 'csObj', 'csEdge', 'csPart']} />
        </Group>
        <Group>
          <Tools names={['cubes', 'antenna']} />
        </Group>
      </div>

      {/* docked panels and modeler */}
      <main className="flex min-h-0 flex-1">
        <div className="flex w-[333px] flex-none flex-col">
          <section className="flex min-h-0 flex-[380] flex-col">
            <Caption title="Project Manager" />
            <TabFrame tab="Project">
              <TreeRows items={projectTree} tall />
            </TabFrame>
          </section>
          <section className="flex min-h-0 flex-[383] flex-col border-t-2 border-[#696969] pt-[3px]">
            <Caption title="Properties" />
            <TabFrame tab="Command">
              <PropertyTable />
            </TabFrame>
          </section>
        </div>

        <aside className="relative mb-1 ml-[7px] w-[287px] flex-none border-2 border-t-[#696969] border-r-[#f8f8f8] border-b-[#f8f8f8] border-l-[#696969] bg-white">
          <TreeRows items={modelTree} />
          <ContextMenu />
        </aside>

        <section className="mb-1 ml-[5px] min-w-0 flex-1 border-2 border-t-[#696969] border-r-[#f0f0f0] border-b-[#f0f0f0] border-l-[#696969] bg-white">
          <Viewport />
        </section>
      </main>

      {/* bottom docks */}
      <div className="flex h-[152px] flex-none border-t-2 border-[#696969]">
        <section className="flex min-w-0 flex-[961] pt-[2px] pr-[7px]">
          <SideCaption title="Message Manager" />
          <div className="mt-px mb-[3px] ml-px flex-1 border border-[#828790] bg-white" />
        </section>
        <section className="flex min-w-0 flex-[958] border-l-2 border-[#696969] pt-[2px] pr-[3px]">
          <SideCaption title="Progress" />
          <div className="mb-[3px] ml-px flex-1 border-2 border-t-[#696969] border-r-[#e3e3e3] border-b-[#e3e3e3] border-l-[#696969] bg-white" />
        </section>
      </div>

      {/* status bar */}
      <footer className="flex h-[22px] flex-none items-end gap-[3px] border-t border-[#a0a0a0] pl-px">
        <p className="flex-1 self-center pt-1">Edit properties for the current selection</p>
        <div className="h-4 w-7 border-t border-l border-[#a0a0a0]" />
        <div className="h-4 w-9 border border-b-0 border-[#a0a0a0] text-center">NUM</div>
        <div className="h-4 w-[35px] border-t border-l border-[#a0a0a0]" />
      </footer>
    </div>
  );
}
